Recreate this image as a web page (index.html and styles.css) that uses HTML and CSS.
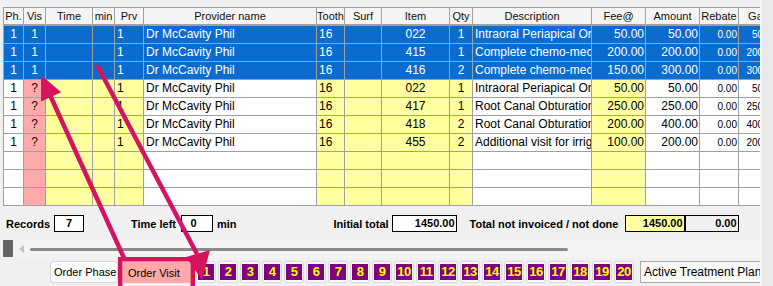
FILE: index.html
```html
<!DOCTYPE html>
<html lang="en">
<head>
    <meta charset="UTF-8">
    <meta name="viewport" content="width=device-width, initial-scale=1.0">
    <title>Treatment Plan</title>
    <link rel="stylesheet" href="styles.css">
</head>
<body>

<div class="window">
    <div class="main">
        <div class="grid" id="grid">
            <div class="cell head">Ph.</div>
            <div class="cell head">Vis</div>
            <div class="cell head">Time</div>
            <div class="cell head">min</div>
            <div class="cell head">Prv</div>
            <div class="cell head">Provider name</div>
            <div class="cell head">Tooth</div>
            <div class="cell head">Surf</div>
            <div class="cell head">Item</div>
            <div class="cell head">Qty</div>
            <div class="cell head">Description</div>
            <div class="cell head">Fee@</div>
            <div class="cell head">Amount</div>
            <div class="cell head">Rebate</div>
            <div class="cell head">Gap</div>
        </div>

        <div class="totals">
            <span class="lbl lbl-records">Records</span>
            <span class="box box-records">7</span>
            <span class="lbl lbl-time">Time left</span>
            <span class="box box-time">0</span>
            <span class="lbl lbl-min">min</span>
            <span class="lbl lbl-initial">Initial total</span>
            <span class="box box-initial">1450.00</span>
            <span class="lbl lbl-notdone">Total not invoiced / not done</span>
            <span class="box box-notdone">1450.00</span>
            <span class="box box-zero">0.00</span>
        </div>

        <div class="hscroll">
            <span class="hs-thumb"></span>
            <span class="hs-arrow"></span>
            <span class="hs-track"></span>
        </div>

        <div class="tabs">
            <button class="btn btn-phase">Order Phase</button>
            <button class="btn btn-visit">Order Visit</button>
            <div class="nums" id="nums"></div>
            <div class="plan">Active Treatment Plan</div>
        </div>
    </div>
    <div class="side"></div>

    <!-- flechas de anotación -->
    <svg class="marks" width="773" height="286" viewBox="0 0 773 286">
        <rect x="120.25" y="259.25" width="72.5" height="40" fill="none" stroke="#d6135f" stroke-width="4.5"/>
        <line x1="124" y1="258" x2="50" y2="95" stroke="#d6135f" stroke-width="4.5"/>
        <polygon points="41,75 61.1,92.2 41.1,101.4" fill="#d6135f"/>
        <line x1="97" y1="65" x2="197" y2="254" stroke="#d6135f" stroke-width="4.5"/>
        <polygon points="202,280 210,250 186,257" fill="#d6135f"/>
    </svg>
</div>

<script>
    const cols = ['ph', 'vis', 'time', 'min', 'prv', 'prov', 'tooth', 'surf', 'item', 'qty', 'desc', 'fee', 'amt', 'reb', 'gap'];
    const chemo = 'Complete chemo-mechanical preparation';
    const canal = 'Root Canal Obturation';
    const intra = 'Intraoral Periapical Oral Radiograph';

    const rows = [
        { sel: true, ph: '1', vis: '1', prv: '1', prov: 'Dr McCavity Phil', tooth: '16', item: '022', qty: '1', desc: intra, fee: '50.00', amt: '50.00', reb: '0.00', gap: '50.00' },
        { sel: true, ph: '1', vis: '1', prv: '1', prov: 'Dr McCavity Phil', tooth: '16', item: '415', qty: '1', desc: chemo, fee: '200.00', amt: '200.00', reb: '0.00', gap: '200.00' },
        { sel: true, ph: '1', vis: '1', prv: '1', prov: 'Dr McCavity Phil', tooth: '16', item: '416', qty: '2', desc: chemo, fee: '150.00', amt: '300.00', reb: '0.00', gap: '300.00' },
        { ph: '1', vis: '?', prv: '1', prov: 'Dr McCavity Phil', tooth: '16', item: '022', qty: '1', desc: intra, fee: '50.00', amt: '50.00', reb: '0.00', gap: '50.00' },
        { ph: '1', vis: '?', prv: '1', prov: 'Dr McCavity Phil', tooth: '16', item: '417', qty: '1', desc: canal, fee: '250.00', amt: '250.00', reb: '0.00', gap: '250.00' },
        { ph: '1', vis: '?', prv: '1', prov: 'Dr McCavity Phil', tooth: '16', item: '418', qty: '2', desc: canal, fee: '200.00', amt: '400.00', reb: '0.00', gap: '400.00' },
        { ph: '1', vis: '?', prv: '1', prov: 'Dr McCavity Phil', tooth: '16', item: '455', qty: '2', desc: 'Additional visit for irrigation', fee: '100.00', amt: '200.00', reb: '0.00', gap: '200.00' },
        {}, {}, {}
    ];

    const grid = document.getElementById('grid');
    rows.forEach(function(r) {
        cols.forEach(function(c) {
            const cell = document.createElement('div');
            cell.className = 'cell c-' + c + (r.sel ? ' sel' : '');
            cell.textContent = r[c] || '';
            grid.appendChild(cell);
        });
    });

    // botones de visita 1..20
    const nums = document.getElementById('nums');
    for (let i = 1; i <= 20; i++) {
        const n = document.createElement('span');
        n.className = 'num';
        const inner = document.createElement('span');
        inner.textContent = i;
        n.appendChild(inner);
        nums.appendChild(n);
    }
</script>

</body>
</html>
```

FILE: styles.css
```css
body {
    margin: 0;
    background: #f0f0f0;
    font-family: "Liberation Sans", Arial, sans-serif;
    font-size: 12px;
    color: #000;
}
.window {
    position: relative;
    width: 773px;
    height: 286px;
    overflow: hidden;
    display: flex;
}
.main {
    width: 760px;
    flex-shrink: 0;
    overflow: hidden;
    padding-top: 7px;
}
.side {
    flex: 1;
    border-left: 2px solid #f8f8f8;
    background: #e9e9e9;
}

/* tabla */
.grid {
    margin-left: 3px;
    border-top: 1px solid #a0a0a0;
    border-left: 1px solid #a0a0a0;
    display: grid;
    grid-template-columns: 20px 22px 47px 22px 29px 173px 28px 37px 68px 23px 119px 54px 54px 39px 40px;
    grid-auto-rows: 18px;
    width: max-content;
    background: #fff;
}
.cell {
    box-sizing: border-box;
    border-right: 1px solid #a0a0a0;
    border-bottom: 1px solid #a0a0a0;
    padding: 0 2px;
    line-height: 17px;
    white-space: nowrap;
    overflow: hidden;
}
.head {
    border-bottom: 2px solid #a0a0a0;
    background: #f4f4f4;
    font-size: 11px;
    line-height: 16px;
    text-align: center;
    color: #111;
    padding: 0;
}
.c-ph, .c-vis, .c-item, .c-qty {
    text-align: center;
}
.c-fee, .c-amt, .c-reb, .c-gap {
    text-align: right;
    padding: 0 1px;
}
.c-reb, .c-gap {
    font-size: 10px;
}
.c-vis {
    background: #ffaaaa;
    color: #300;
}
.c-time, .c-min, .c-prv, .c-tooth, .c-surf, .c-item, .c-qty, .c-fee {
    background: #ffffa0;
}
.cell.sel {
    background: #0a6ccf;
    color: #fff;
}

/* totales */
.totals {
    height: 34px;
    display: flex;
    align-items: center;
    padding-top: 1px;
    box-sizing: border-box;
    font-size: 11px;
    font-weight: bold;
}
.totals > span {
    flex-shrink: 0;
}
.lbl {
    display: inline-block;
    white-space: nowrap;
}
.lbl-records { margin-left: 6px; width: 48px; }
.lbl-time { margin-left: 47px; width: 50px; }
.lbl-min { margin-left: 4px; }
.lbl-initial { margin-left: 97px; width: 58px; }
.lbl-notdone { margin-left: 13px; width: 155px; }
.box {
    display: inline-block;
    box-sizing: border-box;
    height: 17px;
    line-height: 15px;
    border: 1px solid #000;
    background: #fff;
    padding: 0 1px;
}
.box-records { width: 30px; text-align: center; }
.box-time { width: 32px; text-align: center; padding-right: 8px; }
.box-initial { width: 65px; text-align: right; }
.box-notdone { width: 61px; text-align: right; background: #ffffa0; border-right-width: 2px; }
.box-zero { width: 53px; text-align: right; background: #f0f0f0; border-left: none; }

/* barra de desplazamiento */
.hscroll {
    height: 18px;
    display: flex;
    align-items: center;
    background: #f3f3f3;
}
.hs-thumb {
    margin-left: 3px;
    width: 10px;
    height: 17px;
    background: #666;
    align-self: flex-start;
}
.hs-arrow {
    margin-left: 6px;
    width: 0;
    height: 0;
    border-top: 4px solid transparent;
    border-bottom: 4px solid transparent;
    border-right: 5px solid #c4c4c4;
}
.hs-track {
    margin-left: 6px;
    width: 538px;
    height: 3px;
    border-radius: 2px;
    background: #8a8a8a;
}

/* pestañas */
.tabs {
    height: 28px;
    display: flex;
    align-items: flex-start;
    padding-top: 3px;
    box-sizing: border-box;
}
.tabs > * {
    flex-shrink: 0;
}
.btn {
    font-family: "Liberation Sans", Arial, sans-serif;
    font-size: 11px;
    height: 22px;
    padding: 0 3px;
    border-radius: 3px;
    color: #000;
    white-space: nowrap;
}
.btn-phase {
    margin-left: 50px;
    width: 68px;
    background: #fbfbfb;
    border: 1px solid #d6d6d6;
}
.btn-visit {
    margin-left: 5px;
    margin-top: 1px;
    height: 21px;
    width: 67px;
    background: #ffa8a8;
    border: none;
    border-radius: 0;
    text-align: left;
    padding-left: 5px;
}
.nums {
    display: flex;
    gap: 2px;
    margin-left: 6px;
}
.num {
    box-sizing: border-box;
    width: 20px;
    height: 22px;
    padding: 2px 1px;
    border: 1px solid #d9d9d9;
    border-radius: 3px;
    background: #fbfbfb;
}
.num span {
    display: block;
    height: 16px;
    background: #800080;
    color: #ffff00;
    font-weight: bold;
    font-size: 13px;
    line-height: 16px;
    text-align: center;
    letter-spacing: -0.5px;
}
.plan {
    margin-left: 6px;
    width: 140px;
    height: 22px;
    box-sizing: border-box;
    border: 1px solid #a8a8a8;
    background: #f8f8f8;
    padding-left: 3px;
    line-height: 20px;
    white-space: nowrap;
}

.marks {
    position: absolute;
    left: 0;
    top: 0;
    pointer-events: none;
}
```
